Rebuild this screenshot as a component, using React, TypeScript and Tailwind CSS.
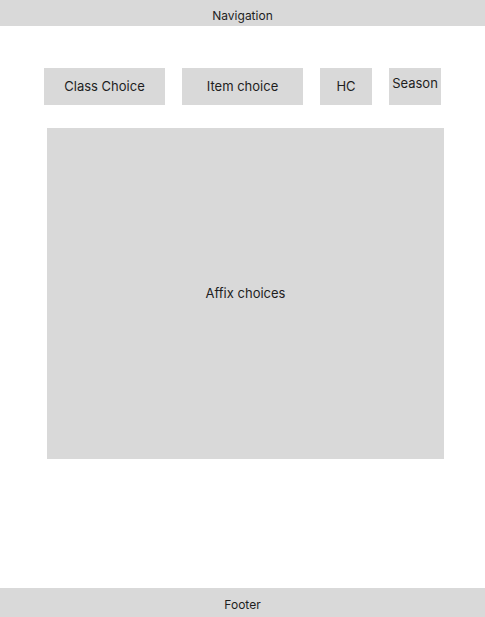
import React from "react";

export default function App() {
  return (
    <div
      className="min-h-screen flex flex-col bg-white text-[#1e1e1e]"
      style={{ fontFamily: "Inter, 'Noto Sans', sans-serif" }}
    >
      <div className="h-[26px] bg-[#d9d9d9] flex items-center justify-center pt-[5px] text-[12px]">
        Navigation
      </div>
      <div className="flex gap-[17px] pl-[44px] mt-[42px]">
        <div className="w-[121px] h-[37px] bg-[#d9d9d9] flex items-center justify-center text-[13px]">
          Class Choice
        </div>
        <div className="w-[121px] h-[37px] bg-[#d9d9d9] flex items-center justify-center text-[13px]">
          Item choice
        </div>
        <div className="w-[52px] h-[37px] bg-[#d9d9d9] flex items-center justify-center text-[13px]">
          HC
        </div>
        <div className="w-[52px] h-[37px] bg-[#d9d9d9] flex items-start justify-center pt-[6px] text-[13px]">
          Season
        </div>
      </div>
      <div className="ml-[47px] mt-[23px] w-[397px] h-[331px] bg-[#d9d9d9] flex items-center justify-center text-[13px]">
        Affix choices
      </div>
      <div className="mt-auto h-[29px] bg-[#d9d9d9] flex items-center justify-center pt-[5px] text-[12px]">
        Footer
      </div>
    </div>
  );
}
